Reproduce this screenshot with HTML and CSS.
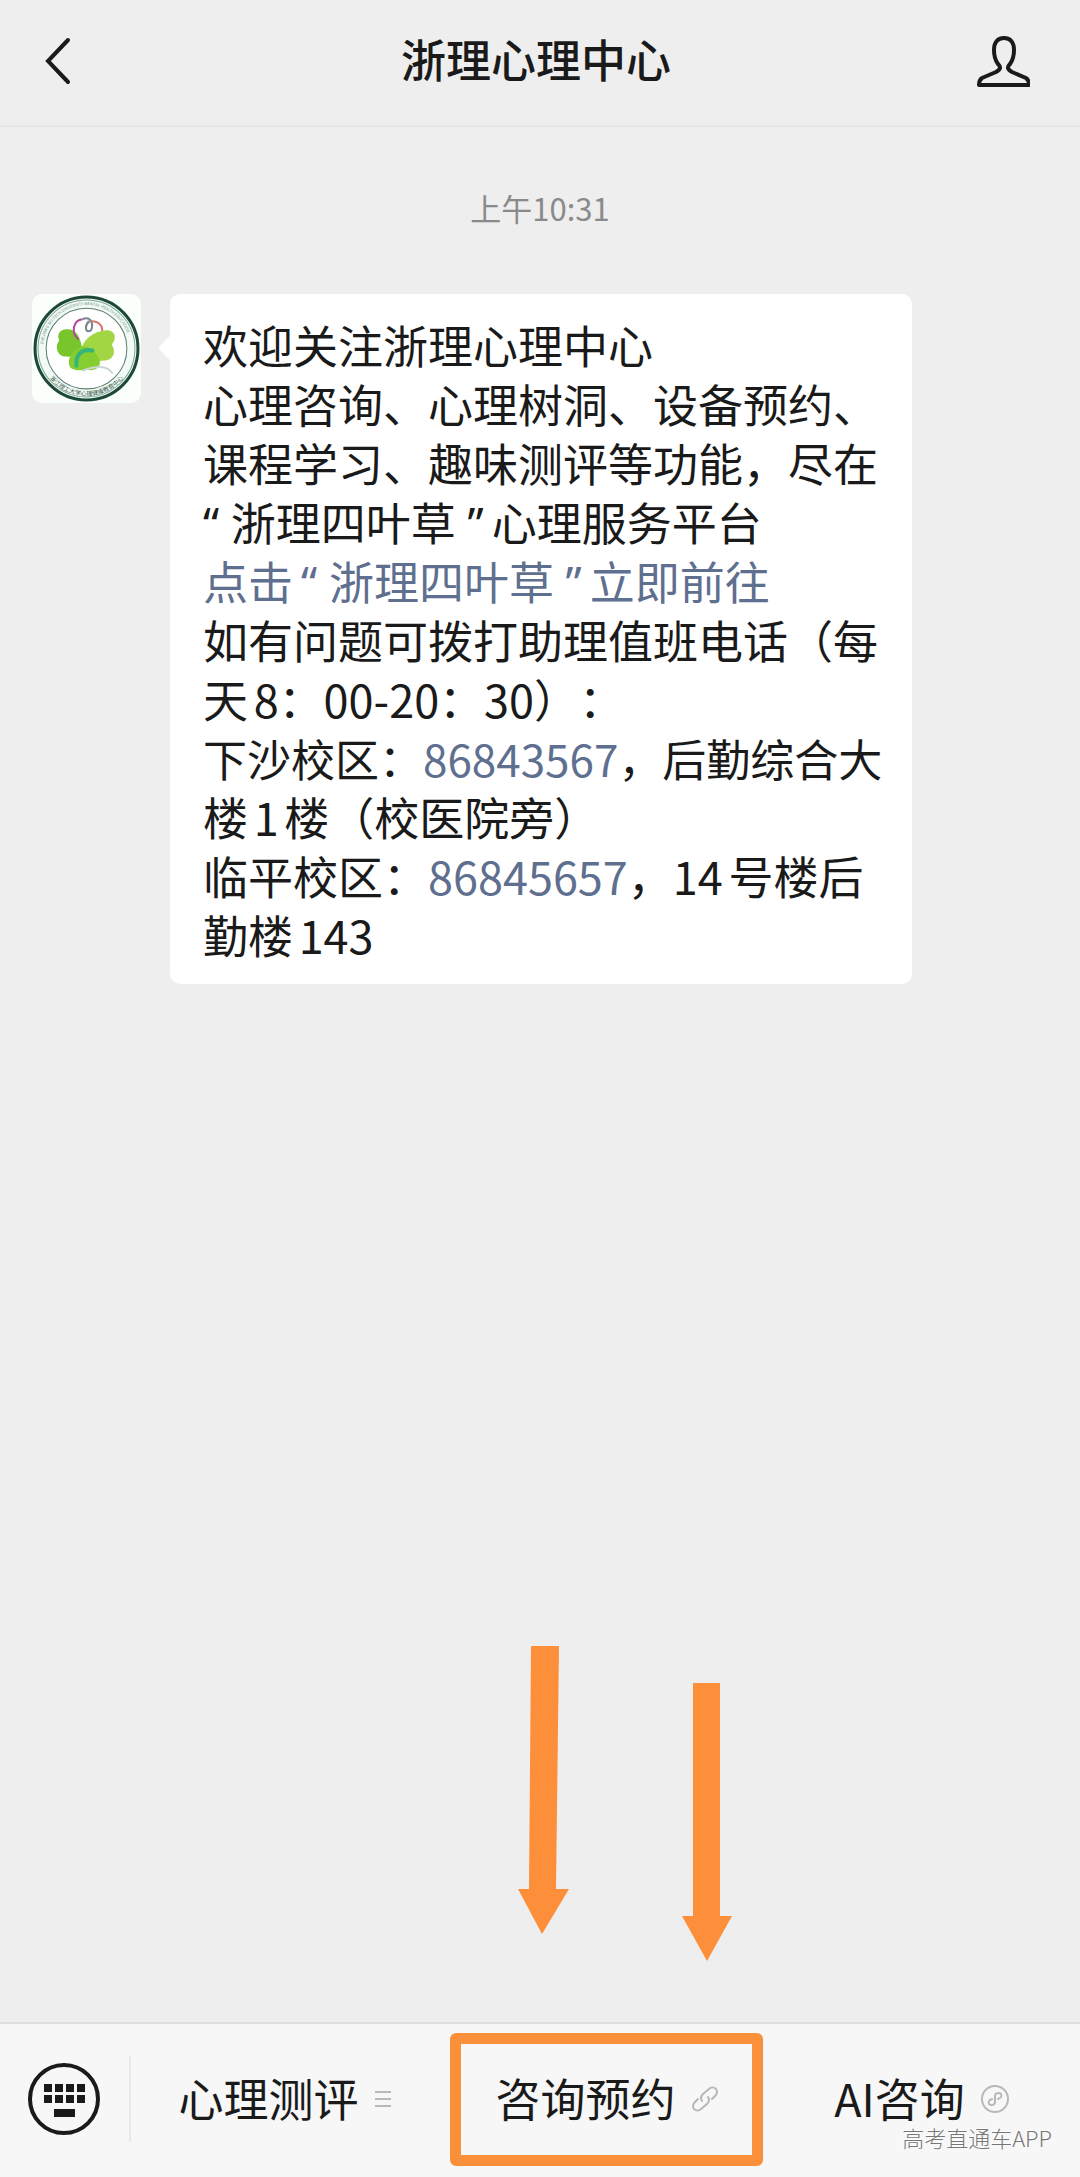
FILE: index.html
```
<!DOCTYPE html>
<html lang="zh-CN">
<head>
    <meta charset="UTF-8">
    <meta name="viewport" content="width=device-width, initial-scale=1.0">
    <title>浙理心理中心</title>
    <link rel="stylesheet" href="styles.css">
</head>
<body>
    <header class="topbar">
        <button type="button" class="icon-button" aria-label="返回">
            <svg width="32" height="50" viewBox="0 0 32 50" fill="none" stroke="#1a1a1a" stroke-width="4" stroke-linecap="round">
                <path d="M26 4 L6 25 L26 46"/>
            </svg>
        </button>
        <h1>浙理心理中心</h1>
        <button type="button" class="icon-button" aria-label="账号资料">
            <svg width="54" height="52" viewBox="0 0 54 52" fill="none" stroke="#1a1a1a" stroke-width="4" stroke-linejoin="round">
                <path d="M28 3 C21 3 18 8 18 15 C18 21 19 25 22 29 C25 32 25 34 20 37 L6 43 Q3 45 3 50 L53 50 Q53 45 50 43 L36 37 C31 34 31 32 34 29 C37 25 38 21 38 15 C38 8 35 3 28 3 Z"/>
            </svg>
        </button>
    </header>

    <main class="chat">
        <time class="chat-time">上午10:31</time>

        <div class="message">
            <svg class="avatar" viewBox="0 0 108 108" role="img" aria-label="浙理心理中心">
                <defs>
                    <path id="ringTop" d="M11 54 A43 43 0 0 1 97 54"/>
                    <path id="ringBottom" d="M7 54 A47 47 0 0 0 101 54"/>
                </defs>
                <rect width="108" height="108" fill="#fbfffb"/>
                <circle cx="54" cy="54" r="51" fill="#f1faf4" stroke="#1d4a38" stroke-width="3"/>
                <circle cx="54" cy="54" r="48" fill="none" stroke="#7fa493" stroke-width="1"/>
                <circle cx="54" cy="54" r="40" fill="#fff" stroke="#5d7d70" stroke-width="1"/>
                <text class="ring-en"><textPath href="#ringTop" startOffset="4">ZHEJIANG SCI-TECH UNIVERSITY MENTAL HEALTH EDUCATION</textPath></text>
                <text class="ring-zh"><textPath href="#ringBottom" startOffset="50%" text-anchor="middle">浙江理工大学心理健康教育中心</textPath></text>
                <path d="M50 56 C49 47 46 36 36 35 C28 34 24 40 27 46 C22 52 25 62 34 62 C42 63 45 58 50 56 Z" fill="#78c62c"/>
                <path d="M46 45 C38 38 41 26 50 25" fill="none" stroke="#b7479b" stroke-width="2"/>
                <path d="M50 25 C61 20 62 37 56 37 C52 37 53 29 57 27" fill="none" stroke="#78858a" stroke-width="2"/>
                <path d="M59 27 C68 27 72 34 68 41" fill="none" stroke="#dc7467" stroke-width="2"/>
                <path d="M48 57 C52 42 64 36 76 36 C84 38 83 46 79 50 C84 58 80 66 71 66 C62 68 56 62 48 57 Z" fill="#a2d642"/>
                <path d="M50 52 C38 56 34 66 38 73 C44 77 50 75 54 75 C64 77 70 72 66 63 C62 55 56 52 50 52 Z" fill="#86ce30"/>
                <path d="M60 56 C49 54 43 60 44 71" fill="none" stroke="#35b678" stroke-width="4" stroke-linecap="round"/>
                <path d="M50 76 C62 71 75 70 80 79" fill="none" stroke="#cdd8d6" stroke-width="2"/>
            </svg>

            <div class="bubble">
                <p>
                    欢迎关注浙理心理中心<br>
                    心理咨询、心理树洞、设备预约、<br>
                    课程学习、趣味测评等功能，尽在<br>
                    <span class="quote">“ </span>浙理四叶草<span class="quote quote-close"> ”</span>心理服务平台<br>
                    <a href="#">点击<span class="quote quote-open">“ </span>浙理四叶草<span class="quote quote-close"> ”</span>立即前往</a><br>
                    如有问题可拨打助理值班电话（每<br>
                    天8：00-20：30）：<br>
                    <span class="tight">下沙校区：<a href="tel:86843567">86843567</a>，后勤综合大</span><br>
                    楼1楼（校医院旁）<br>
                    临平校区：<a href="tel:86845657">86845657</a>，14号楼后<br>
                    勤楼143
                </p>
            </div>
        </div>

        <svg class="arrows" width="216" height="316" viewBox="0 0 216 316" fill="#fd8f3a" aria-hidden="true">
            <path d="M13 0 L41 0 L38 243 L51 243 L24 288 L0 243 L11 243 Z"/>
            <path d="M175 37 L202 37 L202 270 L214 270 L189 315 L164 270 L175 270 Z"/>
        </svg>
    </main>

    <footer class="menu-bar">
        <button type="button" class="keyboard" aria-label="切换到键盘">
            <svg width="74" height="74" viewBox="0 0 74 74">
                <circle cx="37" cy="37" r="34" fill="none" stroke="#1a1a1a" stroke-width="4"/>
                <path d="M17 22h8v8h-8zM28 22h8v8h-8zM39 22h8v8h-8zM50 22h8v8h-8zM17 33h8v8h-8zM28 33h8v8h-8zM39 33h8v8h-8zM50 33h8v8h-8zM27 47h21v8h-21z" fill="#1a1a1a"/>
            </svg>
        </button>
        <nav class="menu">
            <button type="button" class="menu-item">
                <span class="menu-label">心理测评</span>
                <svg width="16" height="16" viewBox="0 0 16 16" stroke="#b8b8b8" stroke-width="2">
                    <path d="M0 1h16M0 8h16M0 15h16"/>
                </svg>
            </button>
            <button type="button" class="menu-item highlighted">
                <span class="menu-label">咨询预约</span>
                <svg width="26" height="26" viewBox="0 0 26 26" fill="none" stroke="#b8b8b8" stroke-width="2" stroke-linecap="round">
                    <path d="M10 15 C8 12 9 10 11 8 L17 3 C19 1 22 1 24 3 C26 6 25 8 23 10 L20 13"/>
                    <path d="M16 11 C18 14 17 16 15 18 L9 23 C7 25 4 25 2 23 C0 20 1 18 3 16 L6 13"/>
                </svg>
            </button>
            <button type="button" class="menu-item">
                <span class="menu-label">AI咨询</span>
                <svg width="28" height="28" viewBox="0 0 28 28" fill="none" stroke="#b8b8b8" stroke-width="2" stroke-linecap="round">
                    <circle cx="14" cy="14" r="13"/>
                    <path d="M17 14 C20 13 21 11 20 9 C18 7 14 8 14 11 L14 17 C14 20 10 21 8 19 C7 17 8 15 11 14"/>
                </svg>
            </button>
        </nav>
        <span class="watermark">高考直通车APP</span>
    </footer>
</body>
</html>
```
FILE: styles.css
```
* {
    box-sizing: border-box;
}
body {
    display: flex;
    flex-direction: column;
    min-height: 100vh;
    margin: 0;
    background-color: #eeeeee;
    color: #1a1a1a;
    font-family: "Noto Sans CJK SC", sans-serif;
}
button {
    padding: 0;
    border: none;
    background: none;
    color: inherit;
    font: inherit;
    cursor: pointer;
}
svg {
    display: block;
    flex: none;
}
a {
    color: #5f6f8f;
    text-decoration: none;
}

/* title bar */
.topbar {
    display: grid;
    grid-template-columns: 1fr auto 1fr;
    align-items: center;
    padding: 24px 50px 32px 42px;
    border-bottom: 2px solid #e6e6e6;
}
.topbar h1 {
    margin: 0;
    font-size: 45px;
    line-height: 69px;
    font-weight: 500;
}
.icon-button {
    justify-self: start;
    padding-top: 4px;
}
.icon-button:last-child {
    justify-self: end;
}

/* conversation */
.chat {
    position: relative;
    display: flex;
    flex-direction: column;
    flex: 1;
}
.chat-time {
    margin: 58px 0 63px;
    color: #8a8a8a;
    font-size: 31px;
    line-height: 46px;
    text-align: center;
    text-autospace: no-autospace;
}
.message {
    display: flex;
    align-items: flex-start;
    gap: 29px;
    padding: 0 32px;
}
.avatar {
    width: 109px;
    height: 109px;
    border-radius: 10px;
}
.ring-en {
    fill: #6f9484;
    font-size: 4px;
}
.ring-zh {
    fill: #3c5c4e;
    font-size: 6px;
}
.bubble {
    position: relative;
    padding: 21px 30px 20px 33px;
    border-radius: 10px;
    background-color: #ffffff;
}
.bubble::before {
    content: "";
    position: absolute;
    top: 44px;
    left: -8px;
    width: 20px;
    height: 20px;
    border-radius: 3px;
    background-color: #ffffff;
    transform: rotate(45deg);
}
.bubble p {
    margin: 0;
    font-size: 45px;
    line-height: 59px;
    white-space: nowrap;
    text-spacing-trim: space-all;
    text-autospace: normal;
}
.bubble .tight {
    font-size: 44px;
    line-height: 1;
}
.quote {
    font-family: "Noto Sans", sans-serif;
    line-height: 1;
}
.quote-open {
    margin-left: 8px;
}
.quote-close {
    margin-right: 8px;
}
.arrows {
    position: absolute;
    left: 48%;
    bottom: 60px;
}

/* bottom menu */
.menu-bar {
    position: relative;
    display: flex;
    align-items: center;
    height: 155px;
    padding-bottom: 3px;
    border-top: 2px solid #dddddd;
    background-color: #f7f7f7;
    text-autospace: no-autospace;
}
.keyboard {
    padding: 0 28px 0 27px;
}
.menu {
    display: grid;
    grid-template-columns: repeat(3, 1fr);
    flex: 1;
    align-items: center;
}
.menu-item {
    display: flex;
    align-items: center;
    justify-content: center;
    gap: 16px;
    height: 86px;
    border-left: 2px solid #e8e8e8;
    font-size: 45px;
}
.menu-item:first-child {
    padding-right: 8px;
}
.menu-item:last-child {
    border-left: none;
}
.menu-item.highlighted {
    height: 133px;
    margin-left: 4px;
    border: 11px solid #fb903b;
    border-radius: 6px;
}
.menu-label {
    padding-bottom: 4px;
}
.watermark {
    position: absolute;
    right: 28px;
    bottom: 24px;
    color: #777777;
    font-size: 22px;
    line-height: 32px;
    font-weight: 300;
    text-shadow: -1px -1px 0 #ffffff;
}
```
